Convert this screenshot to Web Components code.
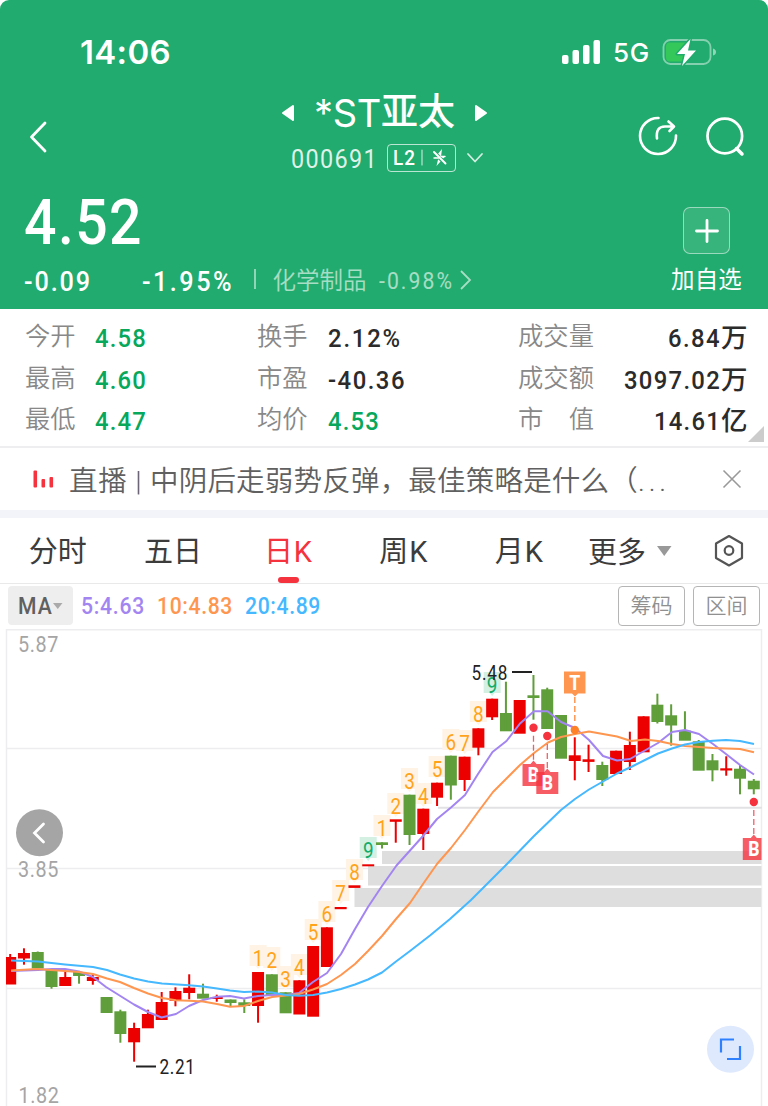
<!DOCTYPE html>
<html lang="zh-CN">
<head>
<meta charset="utf-8">
<title>*ST亚太 000691</title>
<style>
body{
    margin: 0;
    width: 768px;
    height: 1106px;
    overflow: hidden;
    background: #fff;
    font-family: Roboto, "Noto Sans CJK SC", sans-serif;
}
</style>
</head>
<body>
<stock-page></stock-page>
<script>
// text that spreads its letters until it fills the given width,
// "narrow" squeezes the glyphs first (for the condensed figures)
class FitText extends HTMLElement{
    constructor(){
        super();
        this.attachShadow({mode: 'open'}).innerHTML=
        `<style>
        :host{ display: block; white-space: pre; }
        span{ display: inline-block; transform-origin: 0 50%; }
        </style><span><slot></slot></span>`;
    }
    connectedCallback(){
        const span=this.shadowRoot.querySelector('span');
        const width=Number(this.getAttribute('width'));
        const scale=this.hasAttribute('narrow')?0.9:1;
        const letters=[...this.textContent].length;
        this.style.width=width+'px';
        span.style.letterSpacing=(width/scale-span.getBoundingClientRect().width)/letters+'px';
        span.style.marginRight=width-width/scale+'px';
        if(scale!=1) span.style.transform=`scaleX(${scale})`;
    }
}
customElements.define('fit-text', FitText);

class StatusBar extends HTMLElement{
    constructor(){
        super();
        this.attachShadow({mode: 'open'}).innerHTML=
        `<style>
        :host{
            display: flex;
            align-items: center;
            height: 103px;
            padding: 0 50px 0 80px;
            box-sizing: border-box;
            color: #fff;
            font-family: Inter, sans-serif;
        }
        .hora{ font-size: 33px; font-weight: 600; flex: 1; }
        .red{ font-size: 26px; font-weight: 500; margin: 2px 12px 0 12px; }
        svg{ display: block; }
        </style>
        <div class="hora"><fit-text width="91">14:06</fit-text></div>
        <svg width="40" height="26" fill="#fff">
            <rect x="1" y="16" width="6.5" height="9" rx="2"/>
            <rect x="11.5" y="11" width="6.5" height="14" rx="2"/>
            <rect x="22" y="6" width="6.5" height="19" rx="2"/>
            <rect x="32.5" y="1" width="6.5" height="24" rx="2"/>
        </svg>
        <div class="red"><fit-text width="37">5G</fit-text></div>
        <svg width="56" height="30" viewBox="0 0 56 30">
            <rect x="1.5" y="3" width="47" height="24" rx="7" fill="none" stroke="#fff" stroke-opacity=".45" stroke-width="1.8"/>
            <path d="M8 5.5h17v19H8a4 4 0 0 1-4-4v-11a4 4 0 0 1 4-4z" fill="#34c759"/>
            <path d="M51 11.500q3 1 3 3.500t-3 3.500z" fill="#fff" fill-opacity=".5"/>
            <path d="M28.500 2L15 17h8l-3 12L34 13.500h-8z" fill="#fff" stroke="#21ab6e" stroke-width="3" paint-order="stroke" stroke-linejoin="round"/>
        </svg>`;
    }
}
customElements.define('status-bar', StatusBar);

class TitleBar extends HTMLElement{
    constructor(){
        super();
        this.attachShadow({mode: 'open'}).innerHTML=
        `<style>
        :host{
            display: grid;
            grid-template-columns: 281px 1fr 136px;
            height: 81px;
            padding-bottom: 8px;
            box-sizing: border-box;
            color: #fff;
        }
        svg{ display: block; fill: none; stroke: #fff; stroke-linecap: round; stroke-linejoin: round; }
        .volver{ margin: 16px 0 0 26px; }
        .nombre{ display: flex; align-items: center; height: 20px; line-height: 20px; font-weight: 500; }
        .nombre svg{ fill: #fff; }
        .st{ margin: 0 0 0 19px; font-size: 38px; font-weight: 400; font-family: Inter, sans-serif; }
        .cn{ margin: 0 19px 0 0; font-size: 37px; }
        .codigo{ display: flex; align-items: center; height: 28px; margin: 21px 0 0 10px; }
        .codigo fit-text{ font-size: 26px; opacity: .85; margin-top: 2px; }
        .nivel{
            display: flex;
            align-items: center;
            width: 69px;
            height: 28px;
            margin-left: 9px;
            padding-left: 5px;
            box-sizing: border-box;
            border: 1.5px solid rgba(255,255,255,.7);
            border-radius: 4px;
        }
        .nivel fit-text{ font-size: 21px; opacity: 1; line-height: 24px; margin-top: 0; }
        .acciones{ display: flex; gap: 24px; padding-top: 11px; margin-left: 5px; }
        </style>
        <svg class="volver" width="24" height="36"><path stroke-width="2.800" d="M19 4L5.500 18L19 32"/></svg>
        <div>
            <div class="nombre">
                <svg width="14" height="18"><path stroke-width="2" d="M2 9L12 2v14z"/></svg>
                <fit-text class="st" width="67">*ST</fit-text><fit-text class="cn" width="74">亚太</fit-text>
                <svg width="14" height="18"><path stroke-width="2" d="M12 9L2 2v14z"/></svg>
            </div>
            <div class="codigo">
                <fit-text narrow width="87">000691</fit-text>
                <div class="nivel">
                    <fit-text narrow width="23" style="font-weight:500">L2</fit-text>
                    <svg width="40" height="24"><path stroke-width="1.200" stroke-opacity=".7" d="M6 4v15"/>
                    <path fill="#fff" stroke="none" d="M26 3l-7 8.500h3.500l-2 8.500 8.500-9.500h-4z"/>
                    <path stroke="#21ab6e" stroke-width="4" stroke-linecap="butt" d="M17 5.500l13 12.500"/>
                    <path stroke-width="1.900" d="M18 6l11.500 11.500"/>
                    <path stroke-width="1.400" d="M18 12h4.500M25 10.500h4"/></svg>
                </div>
                <svg width="18" height="12" style="margin-left:10px"><path stroke-width="1.800" stroke-opacity=".8" d="M2 2l7 7.500L16 2"/></svg>
            </div>
        </div>
        <div class="acciones">
            <svg width="44" height="44" stroke-width="2.600"><path d="M21.500 4A18 18 0 1 0 39 21.500M20 24.500q-1.500-12 8-12h8.500M31.500 7.500l5.500 5-4.500 4.500"/></svg>
            <svg width="44" height="44" stroke-width="2.700"><circle cx="19.800" cy="22" r="17.300"/><path stroke-width="3.500" d="M31.500 34.500l5.500 5.500"/></svg>
        </div>`;
    }
}
customElements.define('title-bar', TitleBar);

class PriceBoard extends HTMLElement{
    constructor(){
        super();
        this.attachShadow({mode: 'open'}).innerHTML=
        `<style>
        :host{
            display: grid;
            grid-template-columns: 1fr 97px;
            height: 125px;
            color: #fff;
        }
        .precio{ height: 78px; padding-left: 24px; font-size: 63.5px; font-weight: 500; line-height: 78px; }
        .cambio{ display: flex; align-items: center; height: 38px; padding-left: 24px; font-size: 28px; font-weight: 500; }
        .cambio svg{ fill: none; stroke: #fff; stroke-opacity: .6; }
        .raya{ width: 1.5px; height: 20px; margin: -4px 17px 0 20px; background: rgba(255,255,255,.5); }
        .sector{ font-size: 23.5px; font-weight: 400; opacity: .6; }
        .cn{ font-weight: 350; margin-top: -4px; }
        .agregar{ display: flex; flex-direction: column; padding: 23px 0 0 0; }
        .mas{
            display: grid;
            place-items: center;
            width: 47px;
            height: 47px;
            margin-left: 12px;
            box-sizing: border-box;
            border: 1.5px solid rgba(255,255,255,.5);
            border-radius: 7px;
            background: rgba(255,255,255,.1);
        }
        .agregar fit-text{ font-size: 23.5px; line-height: 30px; margin-top: 11px; }
        </style>
        <div>
            <div class="precio"><fit-text narrow width="119">4.52</fit-text></div>
            <div class="cambio">
                <fit-text narrow width="68">-0.09</fit-text>
                <fit-text narrow width="92" style="margin-left:50px">-1.95%</fit-text>
                <div class="raya"></div>
                <fit-text class="sector cn" width="94">化学制品</fit-text>
                <fit-text narrow class="sector" width="75" style="margin-left:12px">-0.98%</fit-text>
                <svg width="14" height="22" style="margin:-2px 0 0 5px"><path stroke-width="1.800" d="M2 2l9 9-9 9"/></svg>
            </div>
        </div>
        <div class="agregar">
            <div class="mas"><svg width="26" height="26" stroke="#fff" stroke-width="2.800" stroke-linecap="round"><path d="M13 2.500v21M2.500 13h21"/></svg></div>
            <fit-text width="71">加自选</fit-text>
        </div>`;
    }
}
customElements.define('price-board', PriceBoard);

class QuoteGrid extends HTMLElement{
    constructor(){
        super();
        this.attachShadow({mode: 'open'}).innerHTML=
        `<style>
        :host{
            display: grid;
            grid-template-columns: 70px 162px 71px 190px 76px 1fr;
            grid-auto-rows: 41.4px;
            align-items: center;
            height: 139px;
            padding: 8px 21px 0 25px;
            box-sizing: border-box;
            border-bottom: 2px solid #eeeef0;
            font-size: 26.5px;
            font-weight: 500;
            line-height: 41px;
            color: #2b2b2b;
            position: relative;
        }
        .n{ font-size: 25.3px; font-weight: 350; color: #888; margin-top: -2px; }
        .v{ color: #07a85b; }
        .d{ display: flex; justify-content: flex-end; }
        svg{ position: absolute; right: 4px; bottom: 4px; }
        </style>
        <fit-text class="n" width="50.500">今开</fit-text><fit-text narrow class="v" width="52">4.58</fit-text>
        <fit-text class="n" width="50.500">换手</fit-text><fit-text narrow width="74">2.12%</fit-text>
        <fit-text class="n" width="76">成交量</fit-text><div class="d"><fit-text narrow width="53">6.84</fit-text><fit-text width="26">万</fit-text></div>
        <fit-text class="n" width="50.500">最高</fit-text><fit-text narrow class="v" width="52">4.60</fit-text>
        <fit-text class="n" width="50.500">市盈</fit-text><fit-text narrow width="78">-40.36</fit-text>
        <fit-text class="n" width="76">成交额</fit-text><div class="d"><fit-text narrow width="97">3097.02</fit-text><fit-text width="26">万</fit-text></div>
        <fit-text class="n" width="50.500">最低</fit-text><fit-text narrow class="v" width="52">4.47</fit-text>
        <fit-text class="n" width="50.500">均价</fit-text><fit-text narrow class="v" width="52">4.53</fit-text>
        <fit-text class="n" width="76">市　值</fit-text><div class="d"><fit-text narrow width="67">14.61</fit-text><fit-text width="26">亿</fit-text></div>
        <svg width="16" height="16"><path d="M16 0v16H0z" fill="#ccc"/></svg>`;
    }
}
customElements.define('quote-grid', QuoteGrid);

class NewsLine extends HTMLElement{
    constructor(){
        super();
        this.attachShadow({mode: 'open'}).innerHTML=
        `<style>
        :host{
            display: flex;
            align-items: center;
            height: 70px;
            padding: 0 25px 0 32px;
            box-sizing: border-box;
            border-bottom: 8px solid #f2f4f9;
            color: #606060;
            font-size: 28.5px;
            font-weight: 350;
        }
        .texto{ display: flex; flex: 1; margin: 5px 0 0 14px; line-height: 40px; }
        svg{ display: block; }
        </style>
        <svg width="23" height="20" fill="#f5333f"><rect x="1.500" y="1.500" width="3.600" height="17" rx="1"/><rect x="9.500" y="10" width="3.600" height="8.500" rx="1"/><rect x="17.500" y="8" width="3.600" height="10.500" rx="1"/></svg>
        <div class="texto"><fit-text width="81">直播 | </fit-text><fit-text width="488">中阴后走弱势反弹，最佳策略是什么（</fit-text><fit-text width="32">...</fit-text></div>
        <svg width="22" height="22" stroke="#999" stroke-width="1.600"><path d="M2.500 2.500l17 17M19.500 2.500l-17 17"/></svg>`;
    }
}
customElements.define('news-line', NewsLine);

class PeriodTabs extends HTMLElement{
    constructor(){
        super();
        this.attachShadow({mode: 'open'}).innerHTML=
        `<style>
        :host{
            display: flex;
            align-items: center;
            height: 66px;
            border-bottom: 1.5px solid #e9e9e9;
            box-sizing: border-box;
            color: #3c3c3c;
            font-size: 29px;
        }
        div{
            display: flex;
            flex-direction: column;
            align-items: center;
            width: 115.4px;
            height: 65px;
            line-height: 69px;
        }
        .activa{ color: #f5333f; }
        .activa::after{ content: ""; width: 21px; height: 6px; margin-top: -10px; border-radius: 3px; background: #f5333f; }
        .mas{ margin: -2px 11px 0; }
        </style>
        <div><fit-text width="58">分时</fit-text></div>
        <div><fit-text width="58">五日</fit-text></div>
        <div class="activa"><fit-text width="49">日K</fit-text></div>
        <div><fit-text width="49">周K</fit-text></div>
        <div><fit-text width="49">月K</fit-text></div>
        <fit-text class="mas" width="58">更多</fit-text>
        <svg width="15" height="10"><path d="M0 0h14.500L7.250 10z" fill="#999"/></svg>
        <svg width="32" height="34" style="margin-left:41px" fill="none" stroke="#555" stroke-width="2.200"><path stroke-linejoin="round" d="M16 2L29 9.500v14.500L16 31.500 3 24V9.500z"/><circle cx="16" cy="16.500" r="4.300"/></svg>`;
    }
}
customElements.define('period-tabs', PeriodTabs);

class AverageBar extends HTMLElement{
    constructor(){
        super();
        this.attachShadow({mode: 'open'}).innerHTML=
        `<style>
        :host{
            display: flex;
            align-items: center;
            height: 45px;
            padding: 0 8px 2px;
            box-sizing: border-box;
            font-size: 23.5px;
        }
        .ma{
            display: flex;
            align-items: center;
            width: 65px;
            height: 39px;
            padding-left: 10px;
            box-sizing: border-box;
            border-radius: 4px;
            background: #eee;
            color: #606060;
            font-weight: 500;
        }
        .valores{ display: flex; gap: 12px; flex: 1; margin: 1px 0 0 8px; font-weight: 500; }
        .boton{
            display: grid;
            place-items: center;
            width: 67px;
            height: 40px;
            margin-left: 8px;
            box-sizing: border-box;
            border: 1.5px solid #b5b5b5;
            border-radius: 4px;
            color: #909090;
            font-size: 21px;
            font-weight: 350;
            line-height: 32px;
        }
        </style>
        <div class="ma"><fit-text narrow width="35">MA</fit-text><svg width="10" height="6"><path d="M0 0h9.500L4.750 6z" fill="#aaa"/></svg></div>
        <div class="valores">
            <fit-text narrow width="64" style="color:#a385f2">5:4.63</fit-text>
            <fit-text narrow width="76" style="color:#ff9650">10:4.83</fit-text>
            <fit-text narrow width="76" style="color:#45b8ff">20:4.89</fit-text>
        </div>
        <div class="boton"><fit-text width="42">筹码</fit-text></div>
        <div class="boton"><fit-text width="42">区间</fit-text></div>`;
    }
}
customElements.define('average-bar', AverageBar);

const ROJO='#ec0000';
const VERDE='#5f9e3a';

// [colour, body top, body bottom, high, low]
const velas=[
    ['r',957,984.5,954,984],['r',953,958.5,948.3,964.7],['g',952,968.5,951.5,968],['g',970,987,970,988.7],['r',977,986,971,986],
    ['g',972,976,972,983.7],['r',977,981,974,984.7],['g',997,1013,997,1013],['g',1011.3,1034,1009.7,1042.7],['r',1028,1042.3,1022.7,1061.7],
    ['r',1014,1028.3,1009.7,1028],['r',1002,1020,992,1020],['r',991,1000.7,987.3,1006.3],['r',987.7,993,974.3,999.3],['g',993.7,998.7,983.7,998],
    ['r',997,999,994.7,1001.7],['g',999.5,1003,999.5,1006.3],['g',1002.3,1006,999.3,1013],['r',972,1006,972,1022.7],['g',974.3,995,974.3,995],
    ['g',992.3,1013.3,992.3,1013],['r',980.3,1014.5,980.3,1014],['r',946,1016.7,946,1016],['r',927.3,967,927.3,967],['r',907,909.2,907,909],
    ['r',885.3,887.9,886,887],['r',864.3,866.3,865,866],['g',842.3,845,842.3,848.5],['r',819.3,821.8,820,842.7],['g',794.7,835,794.7,845],
    ['r',808.7,834,808.7,850],['r',782.7,797.7,782.7,806],['g',755.7,785.5,755.7,799.7],['r',756.7,780,756.7,791],['r',728.3,747.7,728.3,755.3],
    ['r',698.7,717.3,698.7,720],['g',713,731.3,681.7,731],['r',700,733.7,700,733],['g',695.3,698,675,719.7],['g',689.3,729,687.7,729],
    ['g',715,758.7,715,758],['r',755.3,761,737.3,780.3],['r',759.3,761.9,744.7,772],['g',765,780,761.7,786],['r',750.7,774,750.7,774],
    ['r',745,762,731.7,770],['r',716.3,752.3,716.3,752],['g',704.7,722,693.7,723.5],['g',715.3,725.5,704.3,745.7],['g',730.7,740.7,711.3,740],
    ['g',741.3,770.7,740,770],['g',760.3,770.3,754,781.3],['r',768.3,770.5,756.3,775.7],['g',768.7,778.7,765,794.3],['g',780.7,789.3,779,794.3]
];

// [candle, digit, centre y]
const cuenta=[
    [18,1,958],[19,2,960],[20,3,979],[21,4,967],[22,5,932],[23,6,914],[24,7,893],[25,8,872],[26,9,850],
    [27,1,828],[28,2,806],[29,3,781],[30,4,796],[31,5,769],[32,6,742],[33,7,743],[34,8,714],[35,9,685]
];

const medias={
    '#a385f2': '11,971 38,970 52,969 65,969 79,971.5 93,977 106,987 134,1004.5 148,1012 161.5,1017.5 176,1014 189,1006 203,1000 217,996.7 230,996 244,998.5 258,996 272,995 286,995 299,993 313,982 327,973 341,954 355,929 368,907 382,886 396.500,865.5 410,850.5 423,836 437,819 451,807.5 465,795 478,774 492.500,752 506.500,741 520,723.5 534,711.3 547.500,711.3 561,722 575,728 589,740 603,756 617,760.5 630,759 644,751 658,743 672,732 685,730 699,734 713,744 726,754 740,765 754,774.5',
    '#ff9650': '11,970.5 37,969 65,971 79,972 93,974 107,978.5 120,982 134,988 148,993.5 162,998 176,1000.3 189,1000.7 203,1001.5 217,1004 230,1006.8 244,1006 258,1001 272,997 286,995.5 299,994 313,989.5 327,984 341,975 355,964 368,951 382,936 396,919 410,903 423,884 437,864 451,848 465,830 478,812 493,792 506,779 520,765 534,753 548,742.5 561,737 575,734 589,731.5 603,734 617,736.5 631,741 645,739.5 658,741 672,744 685,746 713,748 740,749 754,752.3',
    '#45b8ff': '11,960.5 38,961.5 65,964.5 93,967 107,970 120,974.5 134,978.5 148,981.5 162,983.5 189,985.2 203,986.5 217,988.5 230,990.5 244,992 258,991.5 272,992.5 286,995 299,995.7 313,995 327,992.5 341,989 355,984.5 368,979.5 382,972.5 396,961.5 410,951 430,935.5 450,919 471,900 491,880 507,864 520,850.5 534,836 548,822.5 561,810 575,799 589,789.5 603,781.5 617,773.5 631,767 645,760 658,753.5 672,748.5 685,744.5 699,742 713,740.7 726,740 740,741 754,744'
};

const posX=i=>10.2+13.77*i;

function dibujarVelas(){
    return velas.map(([c,a,b,alto,bajo],i)=>{
        const x=posX(i);
        const color=c=='r'?ROJO:VERDE;
        return `<rect x="${x-6}" y="${a}" width="12" height="${b-a}" fill="${color}"/><rect x="${x-1}" y="${alto}" width="2" height="${bajo-alto}" fill="${color}"/>`;
    }).join('');
}
function dibujarCuenta(){
    return cuenta.map(([i,n,y])=>{
        const x=posX(i);
        return `<path d="M${x-8.5} ${y-13}h17v21h-6l-2.500 3-2.500-3h-6z" fill="${n==9?'#d3f0e2':'#fff3e6'}"/>
        <text transform="translate(${x} ${y+7.5}) scale(.88 1)" font-size="21.5" text-anchor="middle" fill="${n==9?'#14ac68':'#ffa31a'}">${n}</text>`;
    }).join('');
}
// y: marker box centre, punto: dot on the curve
function compra(x,y,punto){
    return `<path d="M${x} ${punto+8}V${y-14}" stroke="#f5333f" stroke-opacity=".8" stroke-width="1.300" stroke-dasharray="6 3"/>
    <circle cx="${x}" cy="${punto}" r="4.200" fill="#f5333f"/>
    <path d="M${x-11} ${y-11}h8l3-3.500 3 3.500h8v22h-22z" fill="#f5333f" fill-opacity=".8"/>
    <text transform="translate(${x} ${y+7}) scale(.9 1)" font-size="19.5" font-weight="800" text-anchor="middle" fill="#fff">B</text>`;
}
// figures drawn narrow, w: width on screen
function cifra(clase,x,y,w,texto){
    return `<text class="${clase}" transform="translate(${x} ${y}) scale(.88 1)" textLength="${w/.88}">${texto}</text>`;
}

class KlineChart extends HTMLElement{
    constructor(){
        super();
        this.attachShadow({mode: 'open'}).innerHTML=
        `<style>
        :host{ display: block; height: 477px; }
        svg{ display: block; font-family: Roboto, sans-serif; }
        .eje{ font-size: 22.5px; fill: #a5a5a5; }
        .marca{ font-size: 19.5px; fill: #222; }
        </style>
        <svg width="768" height="477" viewBox="0 629 768 477">
            <clipPath id="zona"><rect x="6" y="629" width="755.500" height="477"/></clipPath>
            <g fill="none" stroke="#ededef" stroke-width="1.500">
                <path d="M6.500 1106V629.750H761.500V1106M6 748.500H762M6 868.500H762M6 988.500H762"/>
                <path stroke="#e2e2e4" stroke-width="2" d="M438 807.800H762"/>
            </g>
            <g clip-path="url(#zona)">
                <path fill="#fff" d="M382 851h380v56H355v-19h13v-22h14z"/>
                <path fill="#dedede" d="M382 851h380v13H382zM368 866h394v19.500H368zM354.500 888h407.500v19H354.500z"/>
                ${dibujarCuenta()}
                ${dibujarVelas()}
                ${Object.entries(medias).map(([c,p])=>`<polyline points="${p}" fill="none" stroke="${c}" stroke-width="2" stroke-linejoin="round"/>`).join('')}
                ${compra(533.5,775,727.7)}
                ${compra(547.3,783,736)}
                ${compra(753.8,849,802)}
                <path d="M574.800 697V724" stroke="#ff9650" stroke-width="1.500" stroke-dasharray="6 3"/>
                <circle cx="574.800" cy="730" r="4.200" fill="#ff8026"/>
                <path d="M564 671.500h21.500V693.500h-7.500l-3 3-3-3h-8z" fill="#ff9650"/>
                <text transform="translate(574.800 689.500) scale(.9 1)" font-size="19.500" font-weight="800" text-anchor="middle" fill="#fff">T</text>
            </g>
            <path d="M512 672h20M136 1066.500h20" stroke="#222" stroke-width="2"/>
            ${cifra('marca',471.5,679.5,36,'5.48')}
            ${cifra('marca',159.5,1074,35.5,'2.21')}
            ${cifra('eje',18,651.5,40.5,'5.87')}
            ${cifra('eje',18,877,40.5,'3.85')}
            ${cifra('eje',18.5,1103,40.5,'1.82')}
            <circle cx="39.500" cy="832.700" r="23.500" fill="#a5a5a5"/>
            <path d="M43.500 824L34.500 833L43.500 842" fill="none" stroke="#fff" stroke-width="2.800" stroke-linecap="round"/>
            <circle cx="730.500" cy="1049.300" r="23.500" fill="#dfe9fd"/>
            <path d="M721 1052.500V1039.500H734M740 1046V1059H727" fill="none" stroke="#2f80ff" stroke-width="2.200"/>
        </svg>`;
    }
}
customElements.define('kline-chart', KlineChart);

class StockPage extends HTMLElement{
    constructor(){
        super();
        this.attachShadow({mode: 'open'}).innerHTML=
        `<style>
        :host{ display: block; width: 768px; }
        header{ background: #21ab6e; border-radius: 9px 9px 0 0; }
        </style>
        <header>
            <status-bar></status-bar>
            <title-bar></title-bar>
            <price-board></price-board>
        </header>
        <quote-grid></quote-grid>
        <news-line></news-line>
        <period-tabs></period-tabs>
        <average-bar></average-bar>
        <kline-chart></kline-chart>`;
    }
}
customElements.define('stock-page', StockPage);
</script>
</body>
</html>
